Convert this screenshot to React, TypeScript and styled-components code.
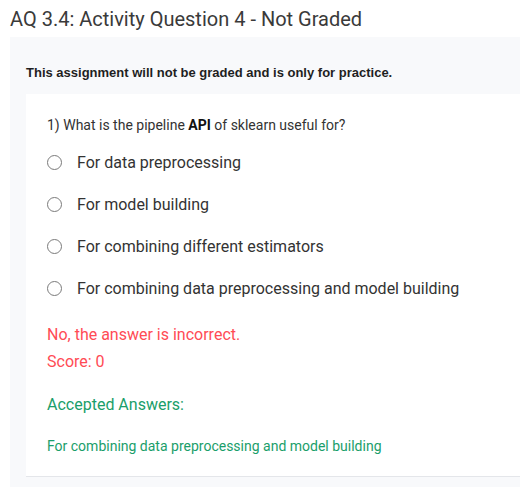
import styled, { createGlobalStyle } from "styled-components";

const GlobalStyle = createGlobalStyle`
  html, body {
    margin: 0;
    padding: 0;
    background: #ffffff;
    font-family: Roboto, "Liberation Sans", sans-serif;
  }
`;

const Page = styled.div`
  width: 520px;
  height: 487px;
  overflow: hidden;
  padding-left: 10px;
  box-sizing: border-box;
`;

const Title = styled.h1`
  margin: 0;
  height: 37px;
  display: flex;
  align-items: center;
  font-size: 20px;
  font-weight: 400;
  color: #3a3a3a;
  padding-top: 1px;
  box-sizing: border-box;
`;

const Panel = styled.div`
  background: #f8f9fb;
  padding: 0 0 20px 16px;
`;

const Notice = styled.div`
  height: 57px;
  display: flex;
  align-items: center;
  padding-top: 13px;
  box-sizing: border-box;
  font-family: "Liberation Sans", Arial, sans-serif;
  font-size: 13px;
  font-weight: 700;
  color: #1f1f1f;
`;

const Card = styled.div`
  background: #ffffff;
  border-bottom: 1px solid #e4e6ea;
  padding: 20px 0 16px 21px;
`;

const Question = styled.div`
  font-size: 14px;
  color: #333333;
  line-height: 22px;
  b {
    font-weight: 700;
    color: #111111;
  }
`;

const Options = styled.div`
  display: flex;
  flex-direction: column;
  margin-top: 5px;
`;

const Option = styled.label`
  display: flex;
  align-items: center;
  gap: 15px;
  height: 42px;
  font-size: 16px;
  color: #333333;
`;

const Radio = styled.span`
  width: 13px;
  height: 13px;
  border: 1px solid #7a7a7a;
  border-radius: 50%;
  flex-shrink: 0;
`;

const Feedback = styled.div<{ tone: "red" | "green"; size?: number }>`
  font-size: ${({ size }) => size || 16}px;
  color: ${({ tone }) => (tone === "red" ? "#ff4b55" : "#1a9e6a")};
  line-height: 27px;
`;

const Result = styled.div`
  margin-top: 12px;
`;

const Accepted = styled.div`
  margin-top: 16px;
  display: flex;
  flex-direction: column;
  gap: 15px;
`;

const options = [
  "For data preprocessing",
  "For model building",
  "For combining different estimators",
  "For combining data preprocessing and model building",
];

export default function App() {
  return (
    <Page>
      <GlobalStyle />
      <Title>AQ 3.4: Activity Question 4 - Not Graded</Title>
      <Panel>
        <Notice>This assignment will not be graded and is only for practice.</Notice>
        <Card>
          <Question>
            1) What is the pipeline <b>API</b> of sklearn useful for?
          </Question>
          <Options>
            {options.map((o) => (
              <Option key={o}>
                <Radio />
                {o}
              </Option>
            ))}
          </Options>
          <Result>
            <Feedback tone="red">No, the answer is incorrect.</Feedback>
            <Feedback tone="red">Score: 0</Feedback>
          </Result>
          <Accepted>
            <Feedback tone="green">Accepted Answers:</Feedback>
            <Feedback tone="green" size={14}>
              For combining data preprocessing and model building
            </Feedback>
          </Accepted>
        </Card>
      </Panel>
    </Page>
  );
}
